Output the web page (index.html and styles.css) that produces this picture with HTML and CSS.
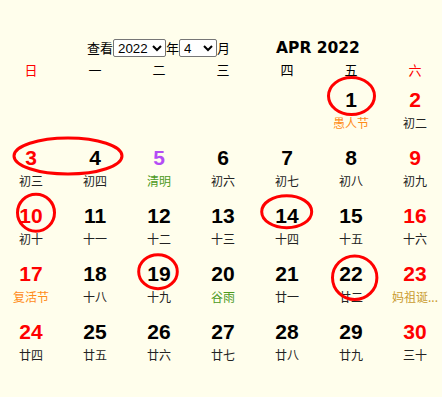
FILE: index.html
```html
<!DOCTYPE html>
<html lang="zh">
<head>
<meta charset="utf-8">
<title>Calendar</title>
<link rel="stylesheet" href="styles.css">
</head>
<body>
<div class="page">
  <div class="header">
    <form class="picker">
      <span class="lbl">查看</span><select class="sel-year"><option>2022</option></select><span class="lbl">年</span><select class="sel-month"><option>4</option></select><span class="lbl">月</span>
    </form>
    <div class="title">APR 2022</div>
  </div>
  <div class="weekdays">
    <div class="wd red">日</div><div class="wd">一</div><div class="wd">二</div><div class="wd">三</div><div class="wd">四</div><div class="wd">五</div><div class="wd red">六</div>
  </div>
  <div class="grid">
    <div class="cell"></div><div class="cell"></div><div class="cell"></div><div class="cell"></div><div class="cell"></div>
    <div class="cell"><div class="num">1</div><div class="lunar orange">愚人节</div></div>
    <div class="cell"><div class="num red">2</div><div class="lunar">初二</div></div>

    <div class="cell"><div class="num red">3</div><div class="lunar">初三</div></div>
    <div class="cell"><div class="num">4</div><div class="lunar">初四</div></div>
    <div class="cell"><div class="num purple">5</div><div class="lunar green">清明</div></div>
    <div class="cell"><div class="num">6</div><div class="lunar">初六</div></div>
    <div class="cell"><div class="num">7</div><div class="lunar">初七</div></div>
    <div class="cell"><div class="num">8</div><div class="lunar">初八</div></div>
    <div class="cell"><div class="num red">9</div><div class="lunar">初九</div></div>

    <div class="cell"><div class="num red">10</div><div class="lunar">初十</div></div>
    <div class="cell"><div class="num">11</div><div class="lunar">十一</div></div>
    <div class="cell"><div class="num">12</div><div class="lunar">十二</div></div>
    <div class="cell"><div class="num">13</div><div class="lunar">十三</div></div>
    <div class="cell"><div class="num">14</div><div class="lunar">十四</div></div>
    <div class="cell"><div class="num">15</div><div class="lunar">十五</div></div>
    <div class="cell"><div class="num red">16</div><div class="lunar">十六</div></div>

    <div class="cell"><div class="num red">17</div><div class="lunar orange">复活节</div></div>
    <div class="cell"><div class="num">18</div><div class="lunar">十八</div></div>
    <div class="cell"><div class="num">19</div><div class="lunar">十九</div></div>
    <div class="cell"><div class="num">20</div><div class="lunar green">谷雨</div></div>
    <div class="cell"><div class="num">21</div><div class="lunar">廿一</div></div>
    <div class="cell"><div class="num">22</div><div class="lunar">廿二</div></div>
    <div class="cell"><div class="num red">23</div><div class="lunar gold">妈祖诞...</div></div>

    <div class="cell"><div class="num red">24</div><div class="lunar">廿四</div></div>
    <div class="cell"><div class="num">25</div><div class="lunar">廿五</div></div>
    <div class="cell"><div class="num">26</div><div class="lunar">廿六</div></div>
    <div class="cell"><div class="num">27</div><div class="lunar">廿七</div></div>
    <div class="cell"><div class="num">28</div><div class="lunar">廿八</div></div>
    <div class="cell"><div class="num">29</div><div class="lunar">廿九</div></div>
    <div class="cell"><div class="num red">30</div><div class="lunar">三十</div></div>
  </div>
  <svg class="marks" width="442" height="397" viewBox="0 0 442 397" aria-hidden="true">
    <g fill="none" stroke="#f00" stroke-width="3">
      <ellipse cx="351.5" cy="96" rx="23" ry="18.5"/>
      <ellipse cx="68" cy="156" rx="54" ry="18"/>
      <ellipse cx="36" cy="212.7" rx="18.5" ry="18.5"/>
      <ellipse cx="286.7" cy="211.7" rx="25" ry="16"/>
      <ellipse cx="158" cy="271.7" rx="19.3" ry="17"/>
      <ellipse cx="354.7" cy="277.7" rx="22.2" ry="21.8"/>
    </g>
  </svg>
</div>
</body>
</html>
```
FILE: styles.css
```css
html, body {
  margin: 0;
  padding: 0;
  background: #fffeec;
  overflow: hidden;
}
body {
  font-family: "Liberation Sans", "Noto Sans CJK SC", sans-serif;
  color: #000;
}
.page {
  position: relative;
  width: 442px;
  height: 397px;
  padding-top: 37px;
  box-sizing: border-box;
}
.header {
  display: flex;
  align-items: center;
  height: 21px;
  padding-left: 87px;
}
.picker {
  display: flex;
  align-items: center;
  margin: 0;
}
.lbl {
  font-family: "Noto Sans CJK SC", sans-serif;
  font-size: 13px;
  line-height: 18px;
}
.sel-year, .sel-month {
  height: 18px;
  font-family: "Liberation Sans", sans-serif;
  font-size: 13.33px;
  margin: 0;
  padding: 0;
  background: #fff;
  border: 1px solid #767676;
  border-radius: 2px;
  color: #000;
}
.sel-year { width: 53px; }
.sel-month { width: 38px; }
.title {
  margin-left: 46px;
  font-family: "DejaVu Sans", sans-serif;
  font-weight: bold;
  font-size: 15.5px;
  line-height: 20px;
}
.weekdays {
  display: grid;
  grid-template-columns: repeat(7, 64px);
  margin-top: 3.5px;
  margin-left: -1px;
}
.wd {
  text-align: center;
  font-family: "Noto Sans CJK SC", sans-serif;
  font-size: 13px;
  line-height: 16px;
  height: 16px;
  color: #000;
}
.grid {
  display: grid;
  grid-template-columns: repeat(7, 64px);
  grid-auto-rows: 58px;
  margin-left: -1px;
}
.cell {
  text-align: center;
  padding-top: 10px;
  box-sizing: border-box;
}
.num {
  font-family: "Liberation Sans", sans-serif;
  font-weight: bold;
  font-size: 21px;
  line-height: 24px;
  height: 24px;
  color: #000;
}
.lunar {
  margin-top: 3px;
  font-family: "Noto Sans CJK SC", sans-serif;
  font-size: 12px;
  line-height: 16px;
  color: #222;
  white-space: nowrap;
}
.red { color: #ff0000; }
.purple { color: #b44cf5; }
.green { color: #4c9a1c; }
.orange { color: #ff8c1a; }
.gold { color: #c99a2e; }
.marks {
  position: absolute;
  left: 0;
  top: 0;
  pointer-events: none;
}
```
